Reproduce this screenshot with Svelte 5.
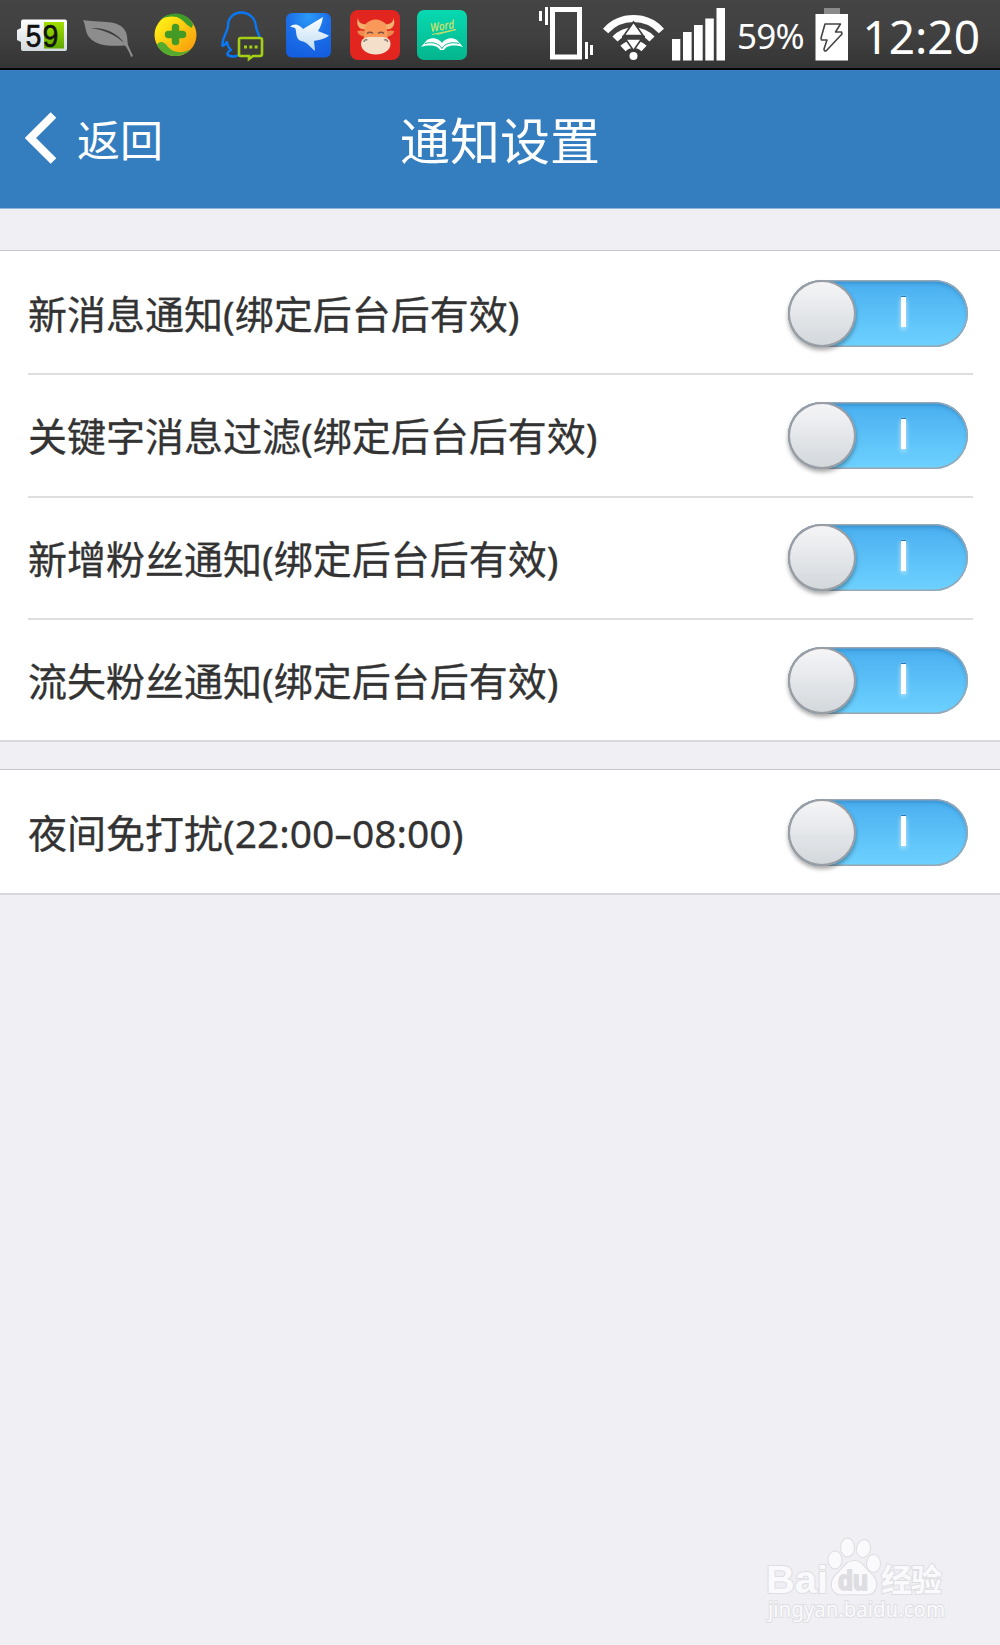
<script lang="ts">
    type Setting = { label: string; range?: [string, string]; on: boolean };

    let groups: Setting[][] = $state([
        [
            { label: '新消息通知(绑定后台后有效)', on: true },
            { label: '关键字消息过滤(绑定后台后有效)', on: true },
            { label: '新增粉丝通知(绑定后台后有效)', on: true },
            { label: '流失粉丝通知(绑定后台后有效)', on: true },
        ],
        [{ label: '夜间免打扰', range: ['22:00', '08:00'], on: true }],
    ]);
</script>

<div class="screen">
    <div class="status-bar">
        <div class="status-left">
            <!-- battery widget -->
            <svg width="75" height="68" viewBox="0 0 75 68">
                <defs>
                    <linearGradient id="shell" x1="0" y1="0" x2="0" y2="1">
                        <stop offset="0" stop-color="#fff" /><stop offset="1" stop-color="#d3dade" />
                    </linearGradient>
                    <linearGradient id="charge" x1="0" y1="0" x2="0" y2="1">
                        <stop offset="0" stop-color="#a4de00" /><stop offset="1" stop-color="#5fa800" />
                    </linearGradient>
                </defs>
                <path d="M23 19.5H65Q67 19.5 67 21.5V49Q67 51 65 51H23Q21 51 21 49V42L17 40V30L21 28V21.5Q21 19.5 23 19.5Z" fill="url(#shell)" />
                <rect x="44" y="22" width="20" height="26.5" fill="url(#charge)" />
                <text x="25" y="47" class="lcd" textLength="34" lengthAdjust="spacingAndGlyphs">59</text>
            </svg>
            <!-- leaf -->
            <svg width="70" height="68" viewBox="75 0 70 68">
                <path d="M83 20C98 23 116 19 124 29C128 34 127 40 128 45L133 56L131 57C129 51 127 48 125 45.5C112 46 97 47 89 37C85 32 86 26 83 20Z" fill="#8d8d8d" />
                <path d="M91 28C104 27 118 33 124 43C116 35 104 30 91 28Z" fill="#3e3e3e" />
            </svg>
            <!-- security guard -->
            <svg width="69" height="68" viewBox="145 0 69 68">
                <defs>
                    <linearGradient id="orb" x1="0" y1="0" x2="1" y2="1">
                        <stop offset="0.2" stop-color="#ffe914" /><stop offset="0.9" stop-color="#f89c0c" />
                    </linearGradient>
                </defs>
                <circle cx="175.5" cy="35" r="21" fill="url(#orb)" />
                <path d="M160 19.5C170 11 186 11 193 24L192 28C187 26 184 20 177 17C171 15.5 165 17 160 19.5Z" fill="#3d9b2b" />
                <path d="M157 45C159 40 165 42 168 47C174 54 185 53 191 49C184 58 164 60 157 45Z" fill="#55ab2d" />
                <path d="M175.5 27.5V41.5M168.5 34.5H182.500" stroke="#439b25" stroke-width="7.5" stroke-linecap="round" />
            </svg>
            <!-- messenger -->
            <svg width="62" height="68" viewBox="214 0 62 68">
                <path d="M228 26C228 8 254 8 256 26C256 30 258 32 259.5 37M228 26C228 32 222 36 222.5 46C225 46 226 42 227 42C227 46 230 49 231 50C227 52 226 55 230 56C234 57 238 56 240 54" fill="none" stroke="#0878f5" stroke-width="2.4" stroke-linejoin="round" />
                <path d="M240.5 38H260Q262 38 262 40V54Q262 56 260 56H253L249 59V56H240.5Q239 56 239 54V40Q239 38 240.5 38Z" fill="#3b3b3b" stroke="#a4cf16" stroke-width="2.6" />
                <path d="M244 47H247M249.300 47H252.300M254.600 47H257.600" stroke="#a4cf16" stroke-width="3" />
            </svg>
            <!-- bird -->
            <svg width="66" height="68" viewBox="276 0 66 68">
                <defs>
                    <radialGradient id="sky" cx="0.5" cy="0.1" r="0.9">
                        <stop offset="0" stop-color="#2b9af8" /><stop offset="0.5" stop-color="#1c6fe8" /><stop offset="1" stop-color="#145fe0" />
                    </radialGradient>
                    <linearGradient id="wing" x1="0" y1="0" x2="0" y2="1">
                        <stop offset="0" stop-color="#fff" /><stop offset="1" stop-color="#bcdcf4" />
                    </linearGradient>
                </defs>
                <rect x="286" y="13" width="45" height="44.5" rx="6" fill="url(#sky)" />
                <path d="M290 26.5C294 23 299 24 303 29L323 17C322 23 320 28 318 31L329 35.5C325 39 319 40 314 41L315 51C309 46 307 42 301 41C295 39 297 31 295 28Z" fill="url(#wing)" />
            </svg>
            <!-- bull -->
            <svg width="67" height="68" viewBox="342 0 67 68">
                <rect x="350" y="10" width="50" height="50" rx="8" fill="#e2261f" />
                <path d="M358 18C355.500 25 359 30 366 29.500L368 24C362 25 358.500 23 358 18ZM393.500 18C396 25 392.500 30 385.500 29.500L383.500 24C389.500 25 393 23 393.500 18Z" fill="#f3b06e" />
                <path d="M357 31.500Q361 29.500 366 32V36.500Q360 37 357 31.500ZM394.500 31.500Q390.500 29.500 385.500 32V36.500Q391.500 37 394.500 31.500Z" fill="#ea8a4c" />
                <path d="M366 23.500Q375.500 15.500 385.500 23.500Q388 32 388 42H363.500Q363.500 32 366 23.500Z" fill="#f99a5b" />
                <path d="M361 44C361 39 365 37 370 37H381.500C386.500 37 390.500 39 390.500 44C390.500 50 384 54.500 375.700 54.500C367.500 54.500 361 50 361 44Z" fill="#f3dfca" />
                <path d="M367 33.5Q370 31 373 33.5M378 33.5Q381 31 384 33.5" fill="none" stroke="#7c5142" stroke-width="1.6" />
                <path d="M364 42Q364 39 367.5 40M387.500 42Q387.500 39 384 40" fill="none" stroke="#77706a" stroke-width="1.3" />
            </svg>
            <!-- word book -->
            <svg width="70" height="68" viewBox="409 0 70 68">
                <defs>
                    <linearGradient id="mint" x1="0" y1="0" x2="0" y2="1">
                        <stop offset="0" stop-color="#08d9b1" /><stop offset="1" stop-color="#04b58d" />
                    </linearGradient>
                </defs>
                <rect x="417" y="10" width="50" height="50" rx="7" fill="url(#mint)" />
                <text x="431" y="32" class="word" transform="rotate(-9 431 32)" textLength="24" lengthAdjust="spacingAndGlyphs">Word</text>
                <path d="M432 34.5L456 29.5L437 34.5" fill="none" stroke="#c8e066" stroke-width="1" />
                <path d="M427 40C434 36 440 40 442 43C444 40 450 36 457 40L463 47C453 44 446 46 444 50H440C438 46 431 44 421 47Z" fill="#fff" />
                <path d="M425 43.500C433 41.500 439 43.500 442 48.500C445 43.500 451 41.500 459 43.500" fill="none" stroke="#08bc94" stroke-width="1" />
            </svg>
        </div>
        <div class="status-right">
            <!-- vibrate -->
            <svg width="64" height="68" viewBox="536 0 64 68">
                <path d="M552.5 9.500H579.500V57H552.5Z" fill="none" stroke="#fff" stroke-width="5" />
                <path d="M539 11H542V21H539ZM545 7H548V25H545ZM585 42H588V59H585ZM590 45H593V55H590Z" fill="#fff" />
            </svg>
            <!-- wifi -->
            <svg width="68" height="68" viewBox="600 0 68 68">
                <g fill="none" stroke="#fff" stroke-width="7">
                    <path d="M605.6 31A37.5 37.5 0 0 1 661.4 31" />
                    <path d="M615 39A25.500 25.500 0 0 1 652 39" />
                    <path d="M623 48.500A15 15 0 0 1 644 48.500" stroke-width="7.500" />
                </g>
                <path d="M622 35.800H645L641 39H626Z" fill="#3e3e3e" />
                <path d="M626 39L633.500 51L641 39H645V36H622V39Z" fill="#3e3e3e" />
                <path d="M633.5 22L643 35.500H624ZM633.5 50.500L625.500 39H641.500Z" fill="#fff" stroke="#3d3d3d" stroke-width="1.6" />
                <circle cx="633.5" cy="56" r="4" fill="#fff" />
            </svg>
            <!-- signal -->
            <svg width="62" height="68" viewBox="668 0 62 68">
                <path d="M672 39H680.3V60.5H672ZM683 32H691.6V60.5H683ZM694 25H702.7V60.5H694ZM705.3 18.5H713.8V60.5H705.3ZM716.5 8H725V60.5H716.5Z" fill="#fff" />
            </svg>
            <span class="percent">59%</span>
            <!-- charging battery -->
            <svg width="41" height="68" viewBox="811 0 41 68">
                <rect x="824" y="8" width="16" height="6" fill="#8a8a8a" />
                <rect x="815.5" y="14" width="32.5" height="46.5" fill="#fff" />
                <path d="M825 24H840.5L835.5 32H841.5L842 34L826.5 50.5Q824 52 824 49L827 40H821.5L821 38Z" fill="none" stroke="#444" stroke-width="1.6" stroke-linejoin="round" />
            </svg>
            <span class="clock">12:20</span>
        </div>
    </div>

    <header class="nav">
        <button class="back">
            <svg width="34" height="54" viewBox="0 0 34 54">
                <path d="M28.500 3L5.500 26L28.500 49" fill="none" stroke="#fff" stroke-width="8" />
            </svg>
            <span>返回</span>
        </button>
        <h1>通知设置</h1>
    </header>

    <main>
        {#each groups as group}
            <section class="group">
                {#each group as item}
                    <div class="row">
                        <span class="label"
                            >{item.label}{#if item.range}({item.range[0]}<span class="dash">-</span>{item.range[1]}){/if}</span
                        >
                        <button
                            class="toggle"
                            class:off={!item.on}
                            aria-label={item.label}
                            aria-pressed={item.on}
                            onclick={() => (item.on = !item.on)}
                        >
                            <span class="knob"></span>
                            <span class="mark"></span>
                        </button>
                    </div>
                {/each}
            </section>
        {/each}
    </main>

    <svg class="watermark" width="200" height="106" viewBox="755 1532 200 106">
        <g fill="#fafafc" stroke="#dedee2" stroke-width="2" paint-order="stroke">
            <text x="766" y="1593" class="brand" textLength="62" lengthAdjust="spacingAndGlyphs">Bai</text>
            <ellipse cx="835" cy="1560" rx="6.5" ry="8.5" />
            <ellipse cx="847.5" cy="1547.500" rx="6.5" ry="9" />
            <ellipse cx="863.5" cy="1548.500" rx="6.5" ry="8.500" transform="rotate(12 863.5 1548.5)" />
            <ellipse cx="873.5" cy="1563.5" rx="6.5" ry="8.5" />
            <path d="M854 1561C862 1561 865 1569 871 1574C880 1582 877 1595 865 1594.5C857 1594 850 1594 843 1594.5C831 1595 828 1582 837 1574C843 1569 846 1561 854 1561Z" />
            <text x="838" y="1590" class="du" textLength="30" lengthAdjust="spacingAndGlyphs">du</text>
            <text x="881" y="1591" class="brand-cn" textLength="61">经验</text>
            <text x="768" y="1617" class="url" textLength="177" lengthAdjust="spacingAndGlyphs">jingyan.baidu.com</text>
        </g>
    </svg>
</div>

<style>
    :global(body) {
        background: #efeff4;
    }

    .screen {
        position: relative;
        width: 1000px;
        height: 1645px;
        overflow: hidden;
        background: #efeff4;
        font-family: 'Noto Sans', 'Noto Sans CJK SC', sans-serif;
    }

    svg {
        display: block;
        flex: none;
    }

    .status-bar {
        display: flex;
        justify-content: space-between;
        box-sizing: border-box;
        height: 70px;
        border-bottom: 2px solid #050607;
        background: linear-gradient(#444, #414141 50%, #343434);
        color: #fff;
    }

    .status-left,
    .status-right {
        display: flex;
        align-items: center;
    }

    .status-right {
        padding-right: 20px;
    }

    .lcd {
        font: 33px 'Liberation Mono', monospace;
        fill: #111;
        stroke: #111;
        stroke-width: 0.6px;
    }

    .word {
        font: italic 600 12px 'Open Sans', sans-serif;
        fill: #d3e36b;
    }

    .percent {
        width: 81px;
        box-sizing: border-box;
        padding: 4px 0 0 7px;
        font-size: 35px;
        letter-spacing: -0.8px;
        line-height: 68px;
        white-space: nowrap;
    }

    .clock {
        width: 128px;
        padding-top: 3px;
        text-align: right;
        font-size: 46px;
        line-height: 68px;
    }

    .nav {
        display: grid;
        grid-template-columns: 1fr auto 1fr;
        align-items: center;
        height: 139px;
        padding: 0 25px;
        background: #347ebf;
        border-bottom: 1px solid #8db4da;
        box-sizing: border-box;
        color: #fff;
    }

    button {
        padding: 0;
        border: 0;
        background: none;
        color: inherit;
        font-family: inherit;
    }

    .back {
        display: flex;
        align-items: center;
        gap: 18px;
        font-size: 43px;
        line-height: 60px;
    }

    .back span {
        padding-top: 4px;
    }

    h1 {
        margin: 0;
        padding-top: 4px;
        font-size: 50px;
        font-weight: 400;
        line-height: 70px;
    }

    main {
        display: flex;
        flex-direction: column;
        gap: 27px;
        padding-top: 41px;
    }

    .group {
        padding: 2px 27px 0 28px;
        border-top: 1px solid #c8c8cc;
        border-bottom: 2px solid #d9d9dc;
        background: #fff;
    }

    .row {
        display: flex;
        align-items: center;
        justify-content: space-between;
        height: 120.33px;
        padding-right: 5px;
        color: #333;
    }

    .row + .row {
        border-top: 2px solid #dedede;
    }

    .label {
        padding-top: 2px;
        font-size: 39px;
        line-height: 54px;
        white-space: nowrap;
        -webkit-text-stroke: 0.3px #333;
    }

    .dash {
        display: inline-block;
        margin: 0 2.5px;
        transform: scaleX(1.5);
    }

    .toggle {
        position: relative;
        width: 180px;
        height: 67px;
        border-radius: 34px;
        background: linear-gradient(#49aeef, #6dd2ff);
        box-shadow:
            inset 0 0 0 1.5px #9aa7b3,
            inset 0 3px 4px rgba(20, 90, 150, 0.4);
    }

    .toggle.off {
        background: #ddd;
    }

    .knob {
        position: absolute;
        top: 0;
        left: 0;
        box-sizing: border-box;
        width: 68px;
        height: 67px;
        border: 2px solid #9a9ea4;
        border-radius: 50%;
        background: linear-gradient(#f5f5f7, #d3d8dc);
        box-shadow: 0 3px 4px rgba(0, 0, 0, 0.35);
    }

    .toggle.off .knob {
        left: 112px;
    }

    .mark {
        position: absolute;
        top: 16px;
        left: 113px;
        width: 5px;
        height: 30px;
        border-top: 1px solid #2a78b4;
        background: #fff;
        box-shadow: 0 2px 5px rgba(255, 255, 255, 0.65);
    }

    .watermark {
        position: absolute;
        left: 755px;
        top: 1532px;
    }

    .brand {
        font: bold 39px 'Liberation Sans', sans-serif;
    }

    .du {
        font: bold 27px 'Liberation Sans', sans-serif;
        fill: #dedee2;
    }

    .brand-cn {
        font: bold 31px 'Noto Sans CJK SC', sans-serif;
    }

    .url {
        font: 22px 'Noto Sans', sans-serif;
    }
</style>
